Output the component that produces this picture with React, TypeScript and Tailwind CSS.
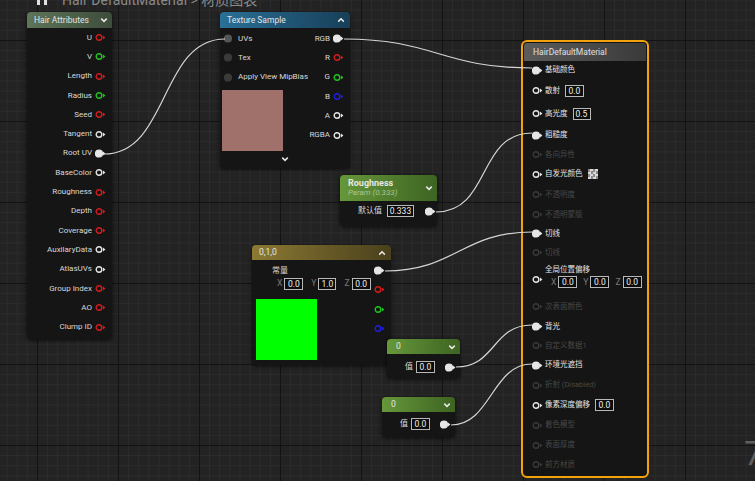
import React from 'react';

const RED = '#d41c1c';
const GREEN = '#1fc41f';
const BLUE = '#1f1fe0';
const WHITE = '#e6e6e6';

function Pin({ color = WHITE, filled = false, dim = false, arrow = true }: { color?: string; filled?: boolean; dim?: boolean; arrow?: boolean }) {
  const c = dim ? '#3a3a3a' : color;
  return (
    <svg width="11" height="9" viewBox="0 0 11 9" className="shrink-0">
      <circle cx="4" cy="4.5" r={filled ? 3.4 : 2.8} fill={filled ? c : 'none'} stroke={c} strokeWidth="1.4" />
      {arrow && <path d="M8 2.6 L10.4 4.5 L8 6.4Z" fill={c} />}
    </svg>
  );
}

function Chevron({ up = false }: { up?: boolean }) {
  return (
    <svg width="8" height="6" viewBox="0 0 8 6" className="shrink-0">
      <polyline points={up ? '1.2,4.6 4,1.8 6.8,4.6' : '1.2,1.6 4,4.4 6.8,1.6'} fill="none" stroke="#e8e8e8" strokeWidth="1.5" />
    </svg>
  );
}

function Box({ v, w }: { v: string; w: string }) {
  return (
    <div className={`h-[12px] ${w} border border-[#b8b8b8] bg-[#0c0c0c] text-[#f0f0f0] text-[8.5px] leading-[10px] flex items-center justify-center`}>{v}</div>
  );
}

function wire(x1: number, y1: number, x2: number, y2: number, d: number) {
  return `M${x1} ${y1} C${x1 + d} ${y1}, ${x2 - d} ${y2}, ${x2} ${y2}`;
}

const hairRows: [string, string, boolean][] = [
  ['U', RED, false],
  ['V', GREEN, false],
  ['Length', RED, false],
  ['Radius', GREEN, false],
  ['Seed', RED, false],
  ['Tangent', WHITE, false],
  ['Root UV', WHITE, true],
  ['BaseColor', WHITE, false],
  ['Roughness', RED, false],
  ['Depth', RED, false],
  ['Coverage', RED, false],
  ['AuxilaryData', WHITE, false],
  ['AtlasUVs', WHITE, false],
  ['Group Index', RED, false],
  ['AO', RED, false],
  ['Clump ID', RED, false],
];

type MRow = { label: string; h: string; state: 'filled' | 'open' | 'dim'; extra?: React.ReactNode };

const matRows: MRow[] = [
  { label: '基础颜色', h: 'h-[18px]', state: 'filled' },
  { label: '散射', h: 'h-[23px]', state: 'open', extra: <Box v="0.0" w="w-[19px]" /> },
  { label: '高光度', h: 'h-[23px]', state: 'open', extra: <Box v="0.5" w="w-[18px]" /> },
  { label: '粗糙度', h: 'h-[20px]', state: 'filled' },
  { label: '各向异性', h: 'h-[19px]', state: 'dim' },
  {
    label: '自发光颜色',
    h: 'h-[20px]',
    state: 'open',
    extra: <div className="w-[10px] h-[10px] bg-[repeating-conic-gradient(#d8d8d8_0_25%,#8a8a8a_0_50%)] bg-[size:5px_5px]" />,
  },
  { label: '不透明度', h: 'h-[21px]', state: 'dim' },
  { label: '不透明蒙版', h: 'h-[19px]', state: 'dim' },
  { label: '切线', h: 'h-[19px]', state: 'filled' },
  { label: '切线', h: 'h-[19px]', state: 'dim' },
];

const matRows2: MRow[] = [
  { label: '次表面颜色', h: 'h-[21px]', state: 'dim' },
  { label: '背光', h: 'h-[19px]', state: 'filled' },
  { label: '自定义数据1', h: 'h-[19px]', state: 'dim' },
  { label: '环境光遮挡', h: 'h-[20px]', state: 'filled' },
  { label: '折射 (Disabled)', h: 'h-[20px]', state: 'dim' },
  { label: '像素深度偏移', h: 'h-[20px]', state: 'open', extra: <Box v="0.0" w="w-[19px]" /> },
  { label: '着色模型', h: 'h-[20px]', state: 'dim' },
  { label: '表面厚度', h: 'h-[20px]', state: 'dim' },
  { label: '前方材质', h: 'h-[19px]', state: 'dim' },
];

function MatRow({ r }: { r: MRow }) {
  return (
    <div className={`${r.h} flex items-center pl-[9px] gap-[2px]`}>
      <Pin filled={r.state === 'filled'} dim={r.state === 'dim'} />
      <span className={r.state === 'dim' ? 'text-[#484848]' : 'text-[#e4e4e4]'}>{r.label}</span>
      {r.extra && <div className="ml-[3px]">{r.extra}</div>}
    </div>
  );
}

export default function App() {
  return (
    <div className="relative w-[755px] h-[481px] overflow-hidden bg-[#232323] bg-[linear-gradient(to_right,#131313_1px,transparent_1px),linear-gradient(to_bottom,#131313_1px,transparent_1px),linear-gradient(to_right,#2c2c2c_1px,transparent_1px),linear-gradient(to_bottom,#2c2c2c_1px,transparent_1px)] bg-[size:81px_81px,81px_81px,10.125px_10.125px,10.125px_10.125px] bg-[position:37px_40px] font-[Roboto,'Noto_Sans_CJK_SC',sans-serif] select-none">
      {/* top title (cut off) */}
      <div className="absolute left-[37px] top-0 flex gap-[4px]">
        <div className="w-[3px] h-[5px] bg-[#e0e0e0]" />
        <div className="w-[3px] h-[5px] bg-[#e0e0e0]" />
      </div>
      <div className="absolute left-[62px] top-[-10px] text-[14px] text-[#8a8a8a] whitespace-nowrap">Hair DefaultMaterial &gt; 材质图表</div>

      {/* Hair Attributes */}
      <div className="absolute left-[27px] top-[12px] w-[85px] rounded-[4px] bg-[#151515] shadow-[0_1px_4px_rgba(0,0,0,0.7)]">
        <div className="h-[16px] rounded-t-[4px] bg-gradient-to-r from-[#5e7559] to-[#3d4d3b] flex items-center justify-between pl-[7px] pr-[4px] text-[8.5px] text-[#e4e4e4]">
          <span>Hair Attributes</span>
          <Chevron />
        </div>
        <div className="flex flex-col pb-[2px]">
          {hairRows.map(([l, c, f]) => (
            <div key={l} className="h-[19.3px] flex items-center justify-end gap-[3px] pr-[6px] text-[8px] text-[#d8d8d8]">
              <span>{l}</span>
              <Pin color={c} filled={f} />
            </div>
          ))}
        </div>
      </div>

      {/* Texture Sample */}
      <div className="absolute left-[220px] top-[12px] w-[130px] h-[156px] rounded-[4px] bg-[#151515] shadow-[0_1px_4px_rgba(0,0,0,0.7)] flex flex-col">
        <div className="h-[16px] rounded-t-[4px] bg-gradient-to-r from-[#2a7097] to-[#173f58] flex items-center justify-between pl-[7px] pr-[5px] text-[8.5px] text-[#e4e4e4]">
          <span>Texture Sample</span>
          <Chevron up />
        </div>
        <div className="flex pt-[1px]">
          <div className="flex flex-col">
            {['UVs', 'Tex', 'Apply View MipBias'].map((l, i) => (
              <div key={l} className="h-[19.3px] flex items-center gap-[3px] pl-[4px] text-[8px] text-[#d8d8d8] whitespace-nowrap">
                <Pin color={i === 0 ? '#555555' : '#3a3a3a'} filled arrow={false} />
                <span>{l}</span>
              </div>
            ))}
            <div className="ml-[2px] mt-[3px] w-[61px] h-[61px] bg-[#a0716b]" />
          </div>
          <div className="flex-1 flex flex-col items-end pr-[6px]">
            {([
              ['RGB', WHITE, true],
              ['R', RED, false],
              ['G', GREEN, false],
              ['B', BLUE, false],
              ['A', WHITE, false],
              ['RGBA', WHITE, false],
            ] as [string, string, boolean][]).map(([l, c, f]) => (
              <div key={l} className="h-[19.3px] flex items-center gap-[3px] text-[8px] text-[#d8d8d8]">
                <span>{l}</span>
                <Pin color={c} filled={f} />
              </div>
            ))}
          </div>
        </div>
        <div className="flex-1 flex items-center justify-center pr-[1px]">
          <Chevron />
        </div>
      </div>

      {/* Roughness param */}
      <div className="absolute left-[340px] top-[175px] w-[97px] rounded-[4px] bg-[#151515] shadow-[0_1px_4px_rgba(0,0,0,0.7)]">
        <div className="h-[26px] rounded-t-[4px] bg-gradient-to-r from-[#66983a] to-[#3e6422] flex items-center justify-between pl-[8px] pr-[4px]">
          <div className="flex flex-col leading-[10px]">
            <span className="text-[9px] font-bold text-[#e6e6e6]">Roughness</span>
            <span className="text-[8px] italic text-[#a9c592]">Param (0.333)</span>
          </div>
          <Chevron />
        </div>
        <div className="h-[20px] flex items-center justify-end pr-[1px] mb-[5px] text-[8px] text-[#d8d8d8]">
          <span className="mr-[5px]">默认值</span>
          <Box v="0.333" w="w-[27px]" />
          <div className="ml-[11px]"><Pin filled /></div>
        </div>
      </div>

      {/* 0,1,0 constant */}
      <div className="absolute left-[252px] top-[245px] w-[139px] h-[120px] rounded-[4px] bg-[#151515] shadow-[0_1px_4px_rgba(0,0,0,0.7)] flex flex-col">
        <div className="h-[15px] rounded-t-[4px] bg-gradient-to-r from-[#8c7a33] to-[#4a401c] flex items-center justify-between pl-[7px] pr-[5px] text-[8.5px] text-[#e4e4e4]">
          <span>0,1,0</span>
          <Chevron up />
        </div>
        <div className="flex flex-1">
          <div className="flex flex-col pt-[5px]">
            <div className="h-[12px] flex items-center pl-[20px] text-[8px] text-[#d8d8d8]">常量</div>
            <div className="h-[13px] flex items-center pl-[25px] gap-[2px] text-[8.5px] text-[#7a7a7a]">
              <span>X</span>
              <Box v="0.0" w="w-[19px]" />
              <span className="ml-[6px]">Y</span>
              <Box v="1.0" w="w-[18px]" />
              <span className="ml-[6px]">Z</span>
              <Box v="0.0" w="w-[19px]" />
            </div>
            <div className="ml-[4px] mt-[9px] w-[61px] h-[61px] bg-[#00ff00]" />
          </div>
          <div className="flex-1 flex flex-col items-end pr-[6px] pt-[1px]">
            <div className="h-[19.3px] flex items-center"><Pin filled /></div>
            <div className="h-[19.3px] flex items-center"><Pin color={RED} /></div>
            <div className="h-[19.3px] flex items-center"><Pin color={GREEN} /></div>
            <div className="h-[19.3px] flex items-center"><Pin color={BLUE} /></div>
          </div>
        </div>
      </div>

      {/* 0 node A */}
      <div className="absolute left-[387px] top-[339px] w-[73px] rounded-[4px] bg-[#151515] shadow-[0_1px_4px_rgba(0,0,0,0.7)]">
        <div className="h-[15px] rounded-t-[4px] bg-gradient-to-r from-[#66983a] to-[#3e6422] flex items-center justify-between pl-[9px] pr-[4px] text-[8.5px] text-[#e4e4e4]">
          <span>0</span>
          <Chevron />
        </div>
        <div className="h-[20px] mt-[3px] mb-[1px] flex items-center justify-end pr-[4px] text-[8px] text-[#d8d8d8]">
          <span className="mr-[3px]">值</span>
          <Box v="0.0" w="w-[19px]" />
          <div className="ml-[10px]"><Pin filled /></div>
        </div>
      </div>

      {/* 0 node B */}
      <div className="absolute left-[382px] top-[397px] w-[73px] rounded-[4px] bg-[#151515] shadow-[0_1px_4px_rgba(0,0,0,0.7)]">
        <div className="h-[15px] rounded-t-[4px] bg-gradient-to-r from-[#66983a] to-[#3e6422] flex items-center justify-between pl-[9px] pr-[4px] text-[8.5px] text-[#e4e4e4]">
          <span>0</span>
          <Chevron />
        </div>
        <div className="h-[20px] mt-[2px] mb-[3px] flex items-center justify-end pr-[4px] text-[8px] text-[#d8d8d8]">
          <span className="mr-[3px]">值</span>
          <Box v="0.0" w="w-[19px]" />
          <div className="ml-[10px]"><Pin filled /></div>
        </div>
      </div>

      {/* HairDefaultMaterial */}
      <div className="absolute left-[521px] top-[40px] w-[128px] h-[438px] rounded-[6px] border-2 border-[#f2a20c] bg-[#151515] flex flex-col text-[7.5px]">
        <div className="h-[18px] mx-[1px] mt-[1px] rounded-t-[3px] bg-gradient-to-r from-[#5c5c5c] to-[#3a3a3a] flex items-center pl-[9px] text-[8.5px] text-[#e0e0e0]">
          HairDefaultMaterial
        </div>
        {matRows.map((r, i) => <MatRow key={i} r={r} />)}
        <div className="h-[34px] flex items-center pl-[9px] gap-[2px]">
          <Pin />
          <div className="flex flex-col">
            <span className="text-[#e4e4e4] leading-[12px] mt-[-6px]">全局位置偏移</span>
            <div className="flex items-center gap-[2px] ml-[6px] text-[8.5px] text-[#7a7a7a]">
              <span>X</span>
              <Box v="0.0" w="w-[19px]" />
              <span className="ml-[4px]">Y</span>
              <Box v="0.0" w="w-[19px]" />
              <span className="ml-[4px]">Z</span>
              <Box v="0.0" w="w-[19px]" />
            </div>
          </div>
        </div>
        {matRows2.map((r, i) => <MatRow key={i} r={r} />)}
      </div>

      {/* wires */}
      <svg className="absolute inset-0 pointer-events-none" width="755" height="481">
        <g fill="none" stroke="#d6d6d6" strokeWidth="1.2">
          <path d={wire(104, 154, 225, 39, 65)} />
          <path d={wire(344, 39, 532, 68, 90)} />
          <path d={wire(436, 212, 532, 133, 55)} />
          <path d={wire(385, 271, 532, 232, 70)} />
          <path d={wire(456, 367, 532, 325, 40)} />
          <path d={wire(451, 425, 532, 364, 40)} />
        </g>
      </svg>

      <div className="absolute left-[744px] top-[436px] text-[34px] leading-none text-[#5e5e5e]">7</div>
    </div>
  );
}
